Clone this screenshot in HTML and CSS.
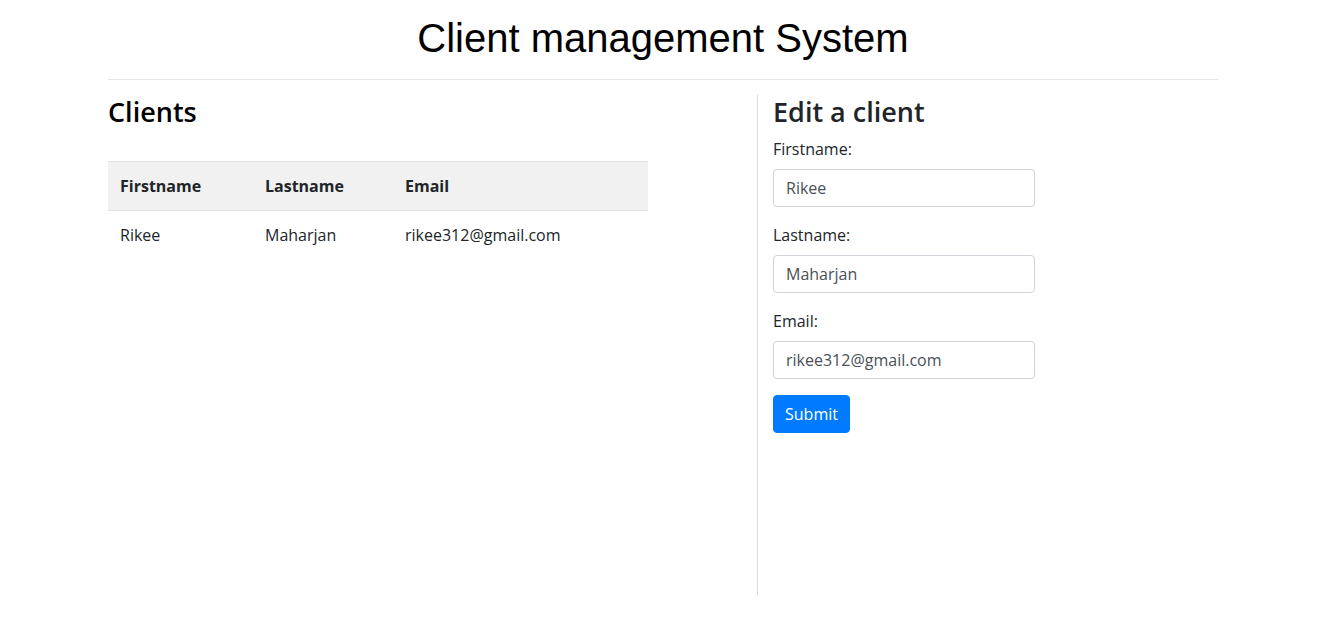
FILE: index.html
```html
<!DOCTYPE html>
<html lang="en">
<head>
<meta charset="utf-8">
<title>Client management System</title>
<link rel="stylesheet" href="styles.css">
</head>
<body>
<h1 class="title">Client management System</h1>
<div class="container">
  <hr class="rule">
  <div class="row">
    <div class="col-left">
      <h2 class="heading heading-black">Clients</h2>
      <table class="table">
        <thead>
          <tr>
            <th class="c1">Firstname</th>
            <th class="c2">Lastname</th>
            <th class="c3">Email</th>
          </tr>
        </thead>
        <tbody>
          <tr>
            <td>Rikee</td>
            <td>Maharjan</td>
            <td>rikee312@gmail.com</td>
          </tr>
        </tbody>
      </table>
    </div>
    <div class="col-right">
      <h2 class="heading">Edit a client</h2>
      <form class="form">
        <div class="form-group">
          <label class="label" for="fn">Firstname:</label>
          <input class="input" id="fn" type="text" value="Rikee">
        </div>
        <div class="form-group">
          <label class="label" for="ln">Lastname:</label>
          <input class="input" id="ln" type="text" value="Maharjan">
        </div>
        <div class="form-group">
          <label class="label" for="em">Email:</label>
          <input class="input" id="em" type="text" value="rikee312@gmail.com">
        </div>
        <button class="btn" type="button">Submit</button>
      </form>
    </div>
  </div>
</div>
</body>
</html>
```
FILE: styles.css
```css
* { box-sizing: border-box; }
body {
  margin: 0;
  font-family: "Open Sans", "Noto Sans", sans-serif;
  font-size: 16px;
  line-height: 1.5;
  color: #212529;
  background: #fff;
}
.title {
  font-family: "Liberation Sans", Arial, sans-serif;
  font-weight: 400;
  font-size: 40px;
  line-height: 1.2;
  text-align: center;
  color: #000;
  margin: 14px 0 0 0;
}
.container {
  width: 1110px;
  margin: 0 auto;
}
.rule {
  margin: 17px 0 15px 0;
  border: 0;
  border-top: 1px solid rgba(0,0,0,.1);
}
.row {
  display: flex;
  height: 500px;
}
.col-left {
  width: 540px;
}
.col-right {
  margin-left: 109px;
  border-left: 1px solid #dcdcdc;
  padding-left: 15px;
  flex: 1;
}
.heading {
  font-size: 27px;
  font-weight: 600;
  line-height: 1.25;
  margin: 0 0 8px 0;
  color: #212529;
}
.heading-black {
  color: #000;
  margin-bottom: 32px;
}
.table {
  width: 540px;
  border-collapse: collapse;
}
.table th {
  text-align: left;
  font-weight: 700;
  background: #f1f1f1;
  padding: 12px;
  border-top: 1px solid #dee2e6;
  border-bottom: 1px solid #dee2e6;
}
.table td {
  padding: 12px;
}
.c1 { width: 145px; }
.c2 { width: 140px; }
.label {
  display: block;
  margin-bottom: 8px;
}
.form-group {
  margin-bottom: 16px;
}
.input {
  display: block;
  width: 262px;
  height: 38px;
  padding: 6px 12px;
  font-family: inherit;
  font-size: 16px;
  line-height: 1.5;
  color: #495057;
  border: 1px solid #ced4da;
  border-radius: 4px;
  background: #fff;
}
.btn {
  font-family: inherit;
  font-size: 16px;
  line-height: 1.5;
  color: #fff;
  background: #007bff;
  border: 1px solid #007bff;
  border-radius: 4px;
  padding: 6px 11px;
  height: 38px;
}
```
